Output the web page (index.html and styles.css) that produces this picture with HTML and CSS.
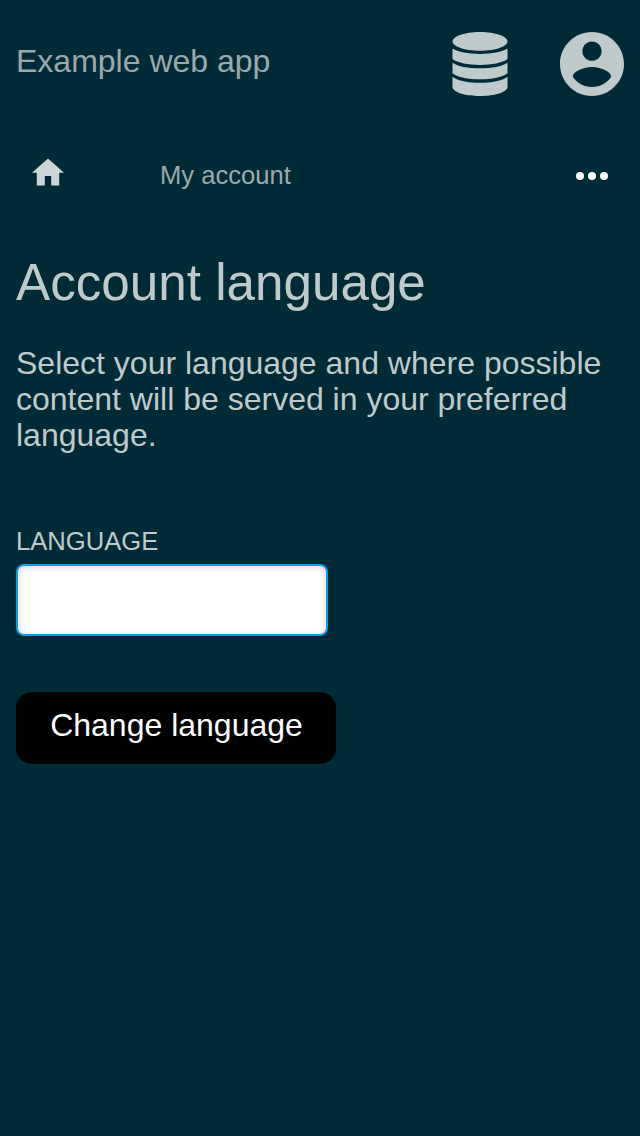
FILE: index.html
```html
<!DOCTYPE html>
<html lang="en">
<head>
<meta charset="utf-8">
<title>Account language</title>
<link rel="stylesheet" href="styles.css">
</head>
<body>
<header class="header">
  <a class="brand">Example web app</a>
  <div class="actions">
    <svg class="icon-db" viewBox="0 0 56 64" aria-hidden="true">
      <path d="M.5 9.500C.5 4.500 12 0 28 0s27.500 4.500 27.500 9.500C55.500 14.500 43 18.800 28 18.800S.5 14.500.5 9.500z"/>
      <path d="M.5 16.500C6 20 16 21.900 28 21.900s22-1.900 27.500-5.400v10.500C50 31 40 32.900 28 32.900S6 31 .5 27z"/>
      <path d="M.5 30.700C6 34.500 16 36.300 28 36.300s22-1.800 27.500-5.600v10.600C50 45.300 40 47.300 28 47.300S6 45.300.5 41.300z"/>
      <path d="M.5 44.700C6 48.700 16 50.700 28 50.700s22-2 27.500-6v10C55.500 60 43 64 28 64S.5 60 .5 54.700z"/>
    </svg>
    <svg class="icon-user" viewBox="2 2 20 20" aria-hidden="true">
      <path d="M12 2C6.480 2 2 6.480 2 12s4.480 10 10 10 10-4.480 10-10S17.520 2 12 2zm0 3c1.660 0 3 1.340 3 3s-1.340 3-3 3-3-1.340-3-3 1.340-3 3-3zm0 14.200c-2.500 0-4.710-1.280-6-3.220.03-1.990 4-3.080 6-3.080 1.990 0 5.970 1.090 6 3.080-1.290 1.940-3.500 3.220-6 3.220z"/>
    </svg>
  </div>
</header>
<nav class="crumbs">
  <svg class="icon-home" viewBox="2 3 20 17" aria-hidden="true"><path d="M10 20v-6h4v6h5v-8h3L12 3 2 12h3v8z"/></svg>
  <span class="crumb">My account</span>
  <svg class="icon-more" viewBox="0 0 32 8" aria-hidden="true"><circle cx="4" cy="4" r="4"/><circle cx="16" cy="4" r="4"/><circle cx="28" cy="4" r="4"/></svg>
</nav>
<main class="main">
  <h1 class="title">Account language</h1>
  <p class="intro">Select your language and where possible content will be served in your preferred language.</p>
  <form class="form">
    <label class="label" for="language">LANGUAGE</label>
    <input class="input" id="language" type="text">
    <button class="button" type="button">Change language</button>
  </form>
</main>
</body>
</html>
```
FILE: styles.css
```css
* { box-sizing: border-box; }
body {
  margin: 0;
  min-height: 100vh;
  background: #002b36;
  color: #bfcacd;
  font: 32px/36px "Liberation Sans", Arial, sans-serif;
}
.header {
  display: flex;
  justify-content: space-between;
  height: 128px;
  padding: 32px 16px 0;
}
.brand { padding-top: 11px; color: #99aaaf; }
.actions { display: flex; gap: 52px; }
.icon-db { width: 56px; height: 64px; fill: #bfcacd; }
.icon-user { width: 64px; height: 64px; fill: #bfcacd; }
.crumbs {
  display: flex;
  align-items: flex-start;
  height: 96px;
  padding: 30px 32px 0;
}
.icon-home { width: 32px; height: 28px; fill: #ccd5d7; }
.crumb {
  margin: 2px auto 0 96px;
  font-size: 25.6px;
  line-height: 30px;
  color: #99aaaf;
}
.icon-more { width: 32px; height: 8px; margin-top: 14px; fill: #fff; }
.main { padding: 0 16px; }
.title {
  margin: 0;
  padding-top: 30px;
  font-size: 51.2px;
  font-weight: 400;
  line-height: 58px;
}
.intro { margin: 33px 0 0; }
.form {
  display: flex;
  flex-direction: column;
  align-items: flex-start;
  padding-top: 73px;
}
.label { font-size: 25.6px; line-height: 30px; }
.input {
  width: 312px;
  height: 72px;
  margin-top: 8px;
  padding: 0 16px;
  border: 2px solid #0e9be8;
  border-radius: 8px;
  outline: 0;
  background: #fff;
  box-shadow: inset 0 2px 6px rgba(0, 0, 0, .15);
  font: inherit;
}
.button {
  width: 320px;
  height: 72px;
  margin-top: 56px;
  padding: 0 0 6px 1px;
  border: 0;
  border-radius: 16px;
  background: #000;
  color: #fff;
  font: inherit;
}
```
